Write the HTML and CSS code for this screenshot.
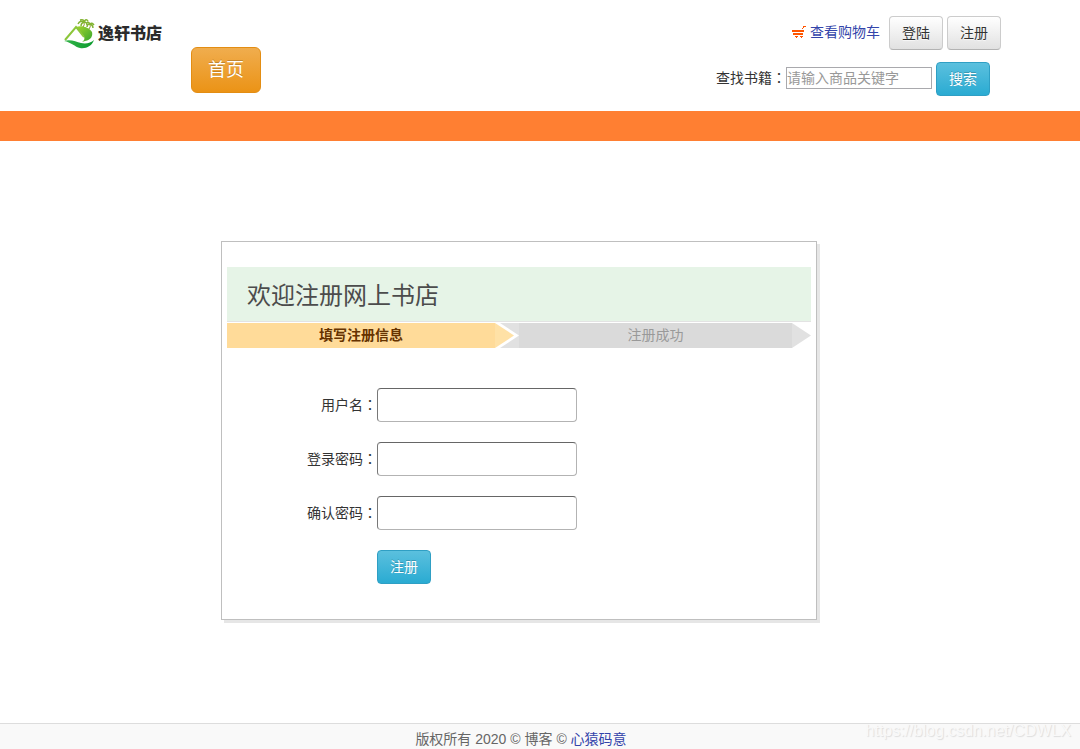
FILE: index.html
```html
<!DOCTYPE html>
<html lang="zh-CN">
<head>
<meta charset="utf-8">
<meta name="viewport" content="width=device-width, initial-scale=1">
<title>欢迎注册网上书店</title>
<link rel="stylesheet" href="styles.css">
</head>
<body>
<header class="header">
  <div class="brand">
    <svg class="logo-mark" viewBox="0 0 32 32" aria-hidden="true">
      <defs>
        <linearGradient id="hill" x1="0" y1="0" x2="1" y2="1">
          <stop offset="0" stop-color="#a5d52c"/>
          <stop offset="1" stop-color="#35a52f"/>
        </linearGradient>
        <linearGradient id="wave" x1="0" y1="0" x2="1" y2="0">
          <stop offset="0" stop-color="#35b44a"/>
          <stop offset="1" stop-color="#0a9a2c"/>
        </linearGradient>
      </defs>
      <path d="M12 9C17 7 25 9 28 14C29 18 27 22 21 23L18 24C21 22 21 20 19 17Z" fill="url(#hill)"/>
      <path d="M1 22L12 9L20 19" fill="none" stroke="#8cc63a" stroke-width="2"/>
      <path d="M0 23C7 21 12 24 17 25C22 26 27 25 30 22C28 28 22 31 16 30C11 29 7 24 0 23Z" fill="url(#wave)"/>
      <path d="M19 9Q21 7 20 4M25 11Q27 9 26 6" fill="none" stroke="#8a9a2a" stroke-width="1"/>
      <path d="M20 4Q16 2 14 6M20 4Q17 5 17 8M20 4Q20 1 16 2M20 4Q22 0 24 3M20 4Q23 4 23 7M26 6Q23 6 23 9M26 6Q24 3 23 5M26 6Q28 4 30 7M26 6Q29 7 29 10" fill="none" stroke="#83b432" stroke-width="1.4"/>
    </svg>
    <span class="logo-text">逸轩书店</span>
  </div>
  <nav class="nav"><a class="btn btn-warning btn-large" href="#">首页</a></nav>
  <div class="tools">
    <div class="account">
      <a class="cart" href="#">
        <svg class="cart-icon" viewBox="0 0 14 12" aria-hidden="true">
          <path d="M11 0H14V1H12V2H11V3H10V2H11ZM0 4H12V6H0ZM1 7H11V9H10V8H2V9H1ZM2 8H11V9H2ZM3 10H6V11H5V12H4V11H3ZM8 10H11V11H10V12H9V11H8Z" fill="#ff5500" shape-rendering="crispEdges"/>
        </svg>
        查看购物车</a>
      <button class="btn" type="button">登陆</button>
      <button class="btn" type="button">注册</button>
    </div>
    <form class="search">
      <label for="keyword">查找书籍<span class="colon" lang="zh-TW">：</span></label>
      <input class="search-input" id="keyword" type="text" placeholder="请输入商品关键字">
      <button class="btn btn-info" type="button">搜索</button>
    </form>
  </div>
</header>
<div class="band"></div>
<main class="main">
  <section class="card">
    <h1 class="title">欢迎注册网上书店</h1>
    <ol class="steps">
      <li class="step step-current">填写注册信息</li>
      <li class="step step-next">注册成功</li>
    </ol>
    <form class="form">
      <label for="username">用户名<span class="colon" lang="zh-TW">：</span></label>
      <input class="field" id="username" type="text">
      <label for="password">登录密码<span class="colon" lang="zh-TW">：</span></label>
      <input class="field" id="password" type="password">
      <label for="confirm">确认密码<span class="colon" lang="zh-TW">：</span></label>
      <input class="field" id="confirm" type="password">
      <button class="btn btn-info submit" type="button">注册</button>
    </form>
  </section>
</main>
<footer class="footer">
  <span>版权所有 2020 © 博客 © <a class="author" href="#">心猿码意</a></span>
  <span class="watermark">https://blog.csdn.net/CDWLX</span>
</footer>
</body>
</html>
```

FILE: styles.css
```css
* {
  box-sizing: border-box;
}

body {
  margin: 0;
  min-height: 100vh;
  display: flex;
  flex-direction: column;
  background: #fff;
  color: #333;
  font: 14px/20px "Liberation Sans", "Noto Sans CJK SC", sans-serif;
}

a {
  color: #3344aa;
  text-decoration: none;
}

input,
button {
  font: inherit;
}

.header {
  display: flex;
  align-items: flex-start;
  padding: 16px 79px 15px 64px;
}

.brand {
  display: flex;
  align-items: center;
  gap: 2px;
  width: 127px;
  padding-top: 2px;
}

.logo-mark {
  width: 32px;
  height: 32px;
}

.logo-text {
  font-size: 16px;
  font-weight: 900;
  color: #2b2b2b;
}

.nav {
  padding-top: 31px;
}

.btn {
  display: inline-block;
  padding: 6px 12px;
  border: 1px solid #ccc;
  border-bottom-color: #b3b3b3;
  border-radius: 4px;
  background: linear-gradient(#fff, #e1e1e1);
  color: #333;
  line-height: 20px;
  text-shadow: 0 1px 1px rgba(255, 255, 255, 0.75);
  white-space: nowrap;
  cursor: pointer;
}

.btn.submit,
.search .btn,
.account .btn {
  width: 54px;
  height: 34px;
  padding: 6px 0;
}

.btn-info {
  border-color: #2f9fc4;
  background: linear-gradient(#5bc0de, #2aabd2);
  color: #fff;
  text-shadow: 0 -1px 0 rgba(0, 0, 0, 0.2);
}

.btn-warning {
  border-color: #e38d13;
  background: linear-gradient(#f0ad4e, #eb9316);
  color: #fff;
  text-shadow: 0 -1px 0 rgba(0, 0, 0, 0.2);
}

.btn-large {
  padding: 10px 16px;
  border-radius: 6px;
  font-size: 18px;
  line-height: 24px;
}

.tools {
  display: flex;
  flex-direction: column;
  align-items: flex-end;
  gap: 12px;
  margin-left: auto;
}

.account,
.search {
  display: flex;
  align-items: center;
  gap: 4px;
}

.cart {
  display: flex;
  align-items: center;
  gap: 4px;
  margin-right: 5px;
  padding-bottom: 2px;
}

.cart-icon {
  width: 14px;
  height: 12px;
}

.search {
  margin-right: 11px;
}

.search label {
  margin-right: -4px;
}

.search-input {
  width: 146px;
  height: 22px;
  padding: 0;
  border: 1px solid #a9a9ad;
  background: #fff;
}

.search label,
.search-input {
  margin-bottom: 2px;
}

.search-input::placeholder {
  color: #999;
}

.colon {
  font-family: "Noto Sans CJK TC", sans-serif;
  line-height: 1;
}

.band {
  height: 30px;
  background: #ff7f32;
}

.main {
  flex: 1;
  padding: 100px 42px 103px 0;
}

.card {
  max-width: 596px;
  margin: 0 auto;
  padding: 25px 5px 35px;
  border: 1px solid #bfbfbf;
  background: #fff;
  box-shadow: 3px 3px 0 #e6e6e6;
}

.title {
  margin: 0 0 1px;
  padding: 14px 20px 10px;
  border-bottom: 1px solid #e3e3e3;
  background: #e6f4e7;
  color: #4c4c4c;
  font-size: 24px;
  font-weight: 400;
  line-height: 30px;
}

.steps {
  display: flex;
  margin: 0 0 40px;
  padding: 0;
  list-style: none;
  line-height: 25px;
  text-align: center;
}

.step-current {
  flex: 268;
  padding-right: 19px;
  background: linear-gradient(to left, #ffe1a6 19px, #ffdb99 19px);
  clip-path: polygon(0 0, calc(100% - 19px) 0, 100% 50%, calc(100% - 19px) 100%, 0 100%);
  color: #663300;
  font-weight: 700;
}

.step-next {
  flex: 273;
  margin-left: -14px;
  padding: 0 19px;
  background: linear-gradient(to right, #e1e1e1 19px, #dadada 19px, #dadada calc(100% - 19px), #e1e1e1 calc(100% - 19px));
  clip-path: polygon(0 0, calc(100% - 19px) 0, 100% 50%, calc(100% - 19px) 100%, 0 100%, 19px 50%);
  color: #999;
}

.form {
  display: grid;
  grid-template-columns: 150px minmax(0, 200px);
  row-gap: 20px;
  align-items: center;
}

.form label {
  text-align: right;
}

.field {
  width: 100%;
  height: 34px;
  padding: 6px 12px;
  border: 1px solid #b3b3b3;
  border-top-color: #666;
  border-left-color: #777;
  border-radius: 4px;
  background: #fff;
}

.submit {
  grid-column: 2;
}

.footer {
  position: relative;
  padding: 5px 38px 0 0;
  border-top: 1px solid #ddd;
  background: #f9f9f9;
  color: #666;
  text-align: center;
}

.watermark {
  position: absolute;
  top: -3px;
  right: 9px;
  color: #f9f9f9;
  font-size: 16px;
  text-shadow: 1px 1px 1px #ddd;
}
```
